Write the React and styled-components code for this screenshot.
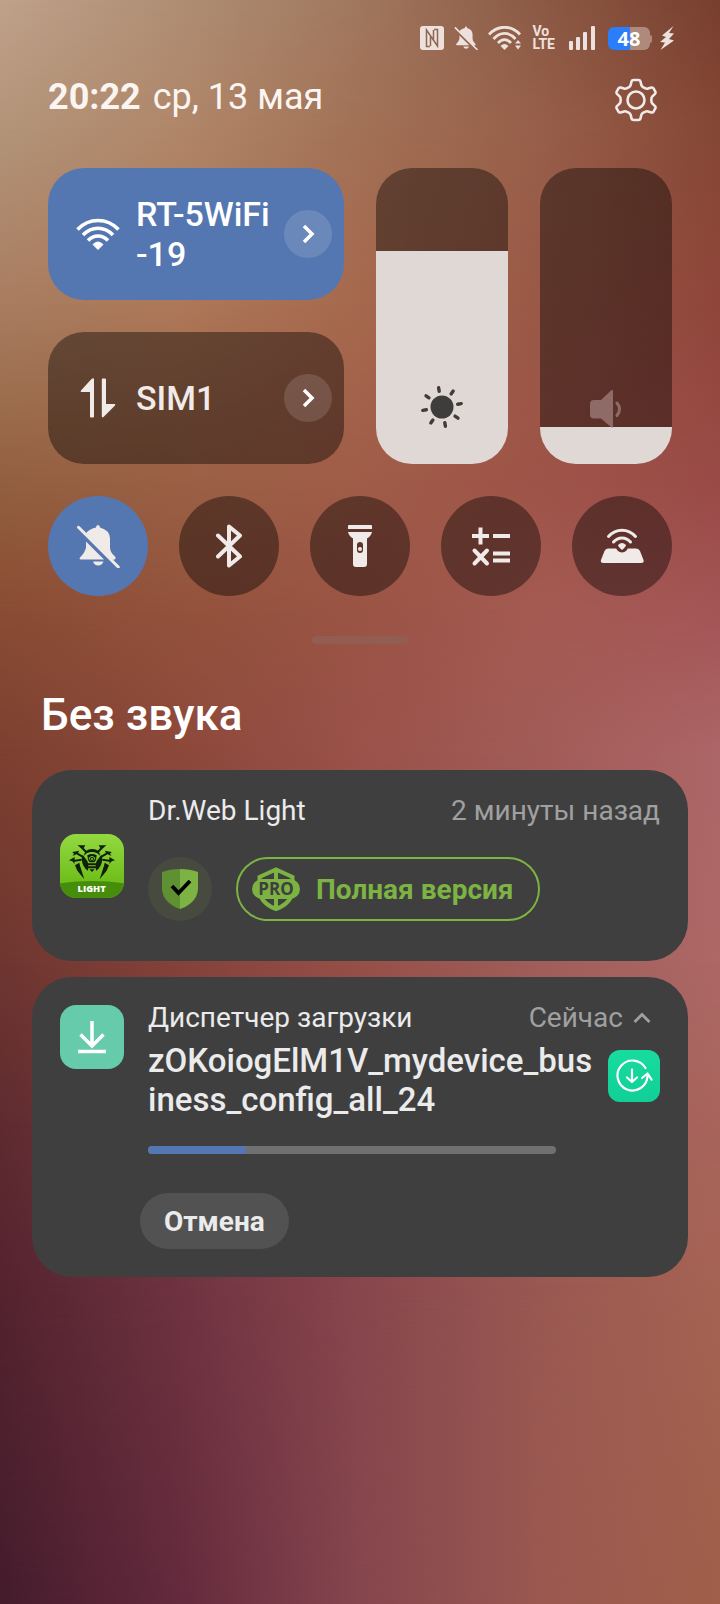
import { useState } from "react";
import styled, { createGlobalStyle } from "styled-components";

// wallpaper colours: [height in %, colours from left to right]
const wallpaper = [
  [0, ["#bfa28a", "#af8e74", "#a0785e", "#8c5a45", "#783f2e"]],
  [8, ["#b39479", "#b08669", "#a27156", "#975f49", "#854635"]],
  [19, ["#a87c60", "#ad7858", "#a6684e", "#9a5846", "#8f463a"]],
  [30, ["#92603f", "#9a6045", "#a05c48", "#9e5448", "#9a4a47"]],
  [38, ["#8a4c34", "#93523c", "#9a5444", "#a45a52", "#a35556"]],
  [47, ["#7c4030", "#8c483a", "#9a524a", "#a25c58", "#ad6667"]],
  [60, ["#6e3630", "#84423a", "#965048", "#a05e5a", "#ad6866"]],
  [70, ["#5f2b30", "#7a3c40", "#8d494a", "#9d5c57", "#a8645c"]],
  [80, ["#54232f", "#6f3340", "#88464d", "#9a5852", "#a56353"]],
  [100, ["#441c2c", "#642a3d", "#85464e", "#9a5850", "#9f5f49"]],
];

const WifiShape = () => (
  <svg width="44" height="34" viewBox="0 0 44 34" fill="none">
    <g stroke="currentColor" strokeWidth="3.600">
      <path d="M1.500 12.500C13 .500 31 .500 42.500 12.500" />
      <path d="M7 18C16 9 28 9 37 18" />
      <path d="M12 23.500C18 17.500 26 17.500 32 23.500" />
    </g>
    <path
      d="M17 27.500Q22 22.500 27 27.500L22 32.500Z"
      fill="currentColor"
      stroke="currentColor"
      strokeLinejoin="round"
    />
  </svg>
);

const DataShape = () => (
  <svg width="44" height="44" viewBox="0 0 44 44" fill="currentColor">
    <path d="M15 3.500q3-2.500 3 0v37q0 1-1 1h-2q-1 0-1-1V16H5.500q-1.500 0-.5-1.500z" />
    <path d="M25.800 3.500q0-1 1-1h2.200q1 0 1 1V28h8.500q1.500 0 .5 1.500L28 40.500q-2.200 2-2.200-.5z" />
  </svg>
);

const BellOff = ({ size }) => (
  <svg width={size} height={size} viewBox="0 0 44 44">
    <g fill="currentColor">
      <path d="M6 35.500q-3.500 0-2-2 5-5 6-10v-6L28 35.500z" />
      <path d="M9.500 10q3-5 10.500-6.500 0-2.500 2-2.500t2 2.500q9.500 2.500 10 11v9q0 5 5 9 2 3-2 3.200h-2z" />
      <path d="M17 37.500h10.500q-1.500 4-5.300 4t-5.200-4z" />
    </g>
    <path
      d="M2.500 3.300L42.300 43"
      stroke="currentColor"
      strokeWidth="3"
      strokeLinecap="round"
    />
  </svg>
);

const BluetoothShape = () => (
  <svg
    width="44"
    height="44"
    viewBox="0 0 44 44"
    fill="none"
    stroke="currentColor"
    strokeWidth="4"
    strokeLinecap="round"
    strokeLinejoin="round"
  >
    <path d="M11 11.500L33 32.500 22 41.500V2.500L33 11.500 11 32.500" />
  </svg>
);

const TorchShape = () => (
  <svg width="44" height="44" viewBox="0 0 44 44" fill="currentColor">
    <path d="M10 2q0-1 1-1h22q1 0 1 1v3H10z" />
    <path
      fillRule="evenodd"
      d="M10 8h24q-1 4-5 6.500V40q0 3-3 3h-8q-3 0-3-3V14.500Q11 12 10 8zM22 18q-3 0-3 3v5q0 3 3 3t3-3v-5q0-3-3-3z"
    />
    <circle cx="22" cy="25" r="2" />
  </svg>
);

const MathShape = () => (
  <svg
    width="44"
    height="44"
    viewBox="0 0 44 44"
    fill="none"
    stroke="currentColor"
    strokeWidth="4"
  >
    <path d="M3 12h17M11.500 3.500v17M24 12h17M24 29.500h17M24 36.500h17" />
    <path d="M5.500 26.500l12.500 13M18 26.500l-12.500 13" strokeLinecap="round" />
  </svg>
);

const RouterShape = () => (
  <svg width="46" height="44" viewBox="0 0 46 44" fill="none">
    <path
      d="M9 24.500h28q3 0 4 2.500l3.500 9q1 3-2.500 3H4.500q-3.500 0-2.500-3l3.500-9q1-2.500 3.500-2.500z"
      fill="currentColor"
    />
    <circle cx="23" cy="22.500" r="6" fill="#60302b" />
    <path d="M19 21q4-4 8 0 0 1.500-4 5-4-3.500-4-5z" fill="currentColor" />
    <g stroke="currentColor" strokeWidth="3" strokeLinecap="round">
      <path d="M9.500 12.500C17 4 29 4 36.500 12.500" />
      <path d="M14.500 18C19 12.500 27 12.500 31.500 18" />
    </g>
  </svg>
);

const ArrowShape = () => (
  <svg width="16" height="20" viewBox="0 0 16 20" fill="none">
    <path d="M4 2L12 10L4 18" stroke="#fff" strokeWidth="3.500" />
  </svg>
);

const GearShape = () => (
  <svg
    width="42"
    height="44"
    viewBox="0 0 42 44"
    fill="none"
    stroke="currentColor"
    strokeWidth="2.600"
    strokeLinejoin="round"
  >
    <path d="M18.500 2h5q1.500 0 2 1.500l.8 3.500q.5 1.500 2 2.300l1.700.9q1.400.8 3 .4l3.400-1q1.400-.4 2.100.8l1.700 3q.8 1.400-.2 2.400l-2.600 2.600q-1.100 1.100-1.100 3.600t1.100 3.600l2.600 2.600q1 1 .2 2.400l-1.700 3q-.7 1.200-2.100.8l-3.400-1q-1.600-.4-3 .4l-1.700.9q-1.500.8-2 2.300l-.8 3.500q-.5 1.500-2 1.500h-5q-1.500 0-2-1.500l-.8-3.500q-.5-1.500-2-2.300l-1.700-.9q-1.400-.8-3-.4l-3.400 1q-1.400.4-2.100-.8l-1.700-3q-.8-1.400.2-2.400l2.600-2.600q1.100-1.100 1.100-3.600t-1.100-3.600L2 15.800q-1-1-.2-2.400l1.700-3q.7-1.200 2.100-.8l3.400 1q1.600.4 3-.4l1.700-.9q1.500-.8 2-2.300l.8-3.500q.5-1.500 2-1.500z" />
    <circle cx="21" cy="22" r="8.500" />
  </svg>
);

const SunShape = () => (
  <svg width="44" height="44" viewBox="0 0 44 44">
    <circle cx="22" cy="22" r="11.500" fill="#3f3d3c" />
    <g stroke="#3f3d3c" strokeWidth="3.400" strokeLinecap="round">
      {[-10, 35, 80, 125, 170, 215, 260, 305].map((angle) => (
        <path
          key={angle}
          d="M22 2.500v3.600"
          transform={`rotate(${angle} 22 22)`}
        />
      ))}
    </g>
  </svg>
);

const SpeakerShape = () => (
  <svg width="34" height="40" viewBox="0 0 34 40" fill="none">
    <path
      d="M5 11h7L22 1.500q2-1 2 0V38q0 1-2 0L12 29.500H5q-4 0-4-4V15q0-4 4-4z"
      fill="#8e6b67"
    />
    <path
      d="M28 14q5 6 0 12.500"
      stroke="#8e6b67"
      strokeWidth="3"
      strokeLinecap="round"
    />
  </svg>
);

const NfcShape = () => (
  <svg width="24" height="24" viewBox="0 0 24 24">
    <rect width="24" height="24" rx="3" fill="currentColor" />
    <path
      d="M10 20.500H6.500V4L17.500 20V3.500H14M10.500 10.500v9.500M13.500 13.500V4"
      fill="none"
      stroke="#8f664f"
      strokeWidth="1.500"
    />
  </svg>
);

const SmallWifi = () => (
  <svg width="34" height="24" viewBox="0 0 34 24" fill="none">
    <g stroke="currentColor" strokeWidth="2.800">
      <path d="M1 8.500C10 -1.200 23 -1.200 32 8.500" />
      <path d="M5.500 13C12 5.500 21 5.500 27.500 13" />
      <path d="M10 17C14 12.500 19 12.500 23 17" />
    </g>
    <path d="M12.500 20q4-4 8 0l-4 4z" fill="currentColor" />
    <path d="M27 17.500l3-3.500 3 3.500zM27 19.500h6L30 23.500z" fill="currentColor" />
  </svg>
);

const SignalShape = () => (
  <svg width="26" height="24" viewBox="0 0 26 24" fill="currentColor">
    <rect x="0" y="15" width="4" height="9" rx="1" />
    <rect x="7" y="11" width="4" height="13" rx="1" />
    <rect x="14" y="6" width="4" height="18" rx="1" />
    <rect x="22" y="0" width="4" height="24" rx="1" />
  </svg>
);

const BoltShape = () => (
  <svg width="14" height="24" viewBox="0 0 14 24" fill="currentColor">
    <path d="M13.500 0L2 9.500l4 1.500L0 16l5 .5L.5 24 14 14.500 9 13l5-5.500-5-.5z" />
  </svg>
);

const DrWebLogo = () => (
  <svg width="64" height="64" viewBox="0 0 192 192">
    <defs>
      <linearGradient id="lime" x1="0" y1="0" x2="0" y2="1">
        <stop offset="0" stopColor="#93d941" />
        <stop offset="0.750" stopColor="#6fbe1b" />
      </linearGradient>
      <clipPath id="tile">
        <rect width="192" height="192" rx="48" />
      </clipPath>
    </defs>
    <g clipPath="url(#tile)">
      <rect width="192" height="192" fill="url(#lime)" />
      <path d="M0 148Q96 134 192 148V192H0z" fill="#468d0c" />
    </g>
    <g fill="#10210a">
      <path d="M72 65Q74 46 96 45t24 20l-8-7q-16-8-32 0z" />
      <path d="M68 62l14 19 3 9-1 20q-17-10-19-36zM124 62l-14 19-3 9 1 20q17-10 19-36z" />
      <path d="M82 64q14-8 28 0l-2 14-5 7h-14l-5-7zM82 88h28v6H82zM84 97h24v6H84zM88 106h16l-8 8z" />
      <path d="M53 34h23l-5 8 12 12-5 4-15-15zM139 34h-23l5 8-12 12 5 4 15-15z" />
      <path d="M37 54l21-4-4 6 17 11-2 5-20-11-12 5 5-6zM155 54l-21-4 4 6-17 11 2 5 20-11 12 5-5-6z" />
      <path d="M27 79l17-10v8l21-3v6l-22 3 1 7-7-8zM165 79l-17-10v8l-21-3v6l22 3-1 7 7-8z" />
      <path d="M45 94l13-8 2 9 13 41-21-26zM147 94l-13-8-2 9-13 41 21-26z" />
    </g>
    <path
      d="M88 77v-6q8-8 16 0v6M92 80l4-8 4 8"
      fill="none"
      stroke="#7bc92b"
      strokeWidth="3"
    />
    <text
      x="95"
      y="173"
      fill="#fff"
      fontFamily="Open Sans, sans-serif"
      fontSize="28"
      fontWeight="800"
      textAnchor="middle"
    >
      LIGHT
    </text>
  </svg>
);

const ShieldShape = () => (
  <svg width="36" height="40" viewBox="0 0 36 40">
    <path d="M18 0Q8 0 0 3v17q1 14 18 20z" fill="#5f9031" />
    <path d="M18 0q10 0 18 3v17q-1 14-18 20z" fill="#7db342" />
    <path
      d="M10 17l6.500 7L28 12"
      fill="none"
      stroke="#000"
      strokeWidth="3.800"
    />
  </svg>
);

const ProShape = () => (
  <svg width="48" height="44" viewBox="0 0 48 44">
    <path
      d="M7.500 15V10L24 2.500 40.500 10v5M24 2v12M9 30q4 8 15 12 11-4 15-12M24 30v12"
      fill="none"
      stroke="#7cb342"
      strokeWidth="4"
    />
    <rect y="12" width="48" height="20" rx="10" fill="#7cb342" />
    <text
      x="24"
      y="28"
      fill="#3f3f3f"
      fontFamily="Open Sans, sans-serif"
      fontSize="17"
      fontWeight="700"
      textAnchor="middle"
    >
      PRO
    </text>
  </svg>
);

const DownloadShape = () => (
  <svg width="32" height="34" viewBox="0 0 32 34" fill="none">
    <path
      d="M16 1v25M4.500 14.500L16 26l11.500-11.500M2 31.500h28"
      stroke="#fff"
      strokeWidth="3.500"
    />
  </svg>
);

const UpdateShape = () => (
  <svg
    width="38"
    height="34"
    viewBox="0 0 38 34"
    fill="none"
    stroke="#fff"
    strokeWidth="2.200"
    strokeLinecap="round"
    strokeLinejoin="round"
  >
    <path d="M30.500 9A15 15 0 1 0 32.500 17v-1M27 19l5.500-4.500 4 6" />
    <path d="M17 10.500V23M12 18.500l5 4.500 5-4.500" />
  </svg>
);

const ChevronUp = () => (
  <svg width="18" height="12" viewBox="0 0 18 12" fill="none">
    <path d="M1.500 10L9 2.500l7.500 7.500" stroke="#a0a0a0" strokeWidth="2.800" />
  </svg>
);

const toggles = [
  { label: "Без звука", icon: <BellOff size={44} />, on: true },
  { label: "Bluetooth", icon: <BluetoothShape /> },
  { label: "Фонарик", icon: <TorchShape /> },
  { label: "Калькулятор", icon: <MathShape /> },
  { label: "Точка доступа", icon: <RouterShape /> },
];

const LevelSlider = ({ label, start, icon }) => {
  const [level, setLevel] = useState(start);
  return (
    <SliderBox>
      <SliderInput
        type="range"
        min="0"
        max="1000"
        aria-label={label}
        value={level}
        style={{ "--level": `${level / 10}%` }}
        onChange={(e) => setLevel(Number(e.target.value))}
      />
      <SliderIcon>{icon}</SliderIcon>
    </SliderBox>
  );
};

const App = () => {
  return (
    <Screen>
      <GlobalStyle />
      <Wallpaper aria-hidden="true">
        {wallpaper.map(([stop, colors], i) => (
          <Band
            key={stop}
            $from={i === 0 ? -1 : wallpaper[i - 1][0]}
            $to={stop}
            $colors={colors.join(", ")}
          />
        ))}
      </Wallpaper>

      <StatusBar>
        <NfcShape />
        <BellOff size={24} />
        <SmallWifi />
        <Volte>
          <span>Vo</span>
          <span>LTE</span>
        </Volte>
        <SignalShape />
        <Power>
          <Battery>48</Battery>
          <BoltShape />
        </Power>
      </StatusBar>

      <Header>
        <Clock>
          <b>20:22</b>
          <span>ср, 13 мая</span>
        </Clock>
        <GearButton aria-label="Настройки">
          <GearShape />
        </GearButton>
      </Header>

      <Controls>
        <Tiles>
          <Tile $on>
            <TileButton>
              <WifiShape />
              <span>
                RT-5WiFi
                <br />
                -19
              </span>
            </TileButton>
            <MoreButton aria-label="Сети Wi-Fi">
              <ArrowShape />
            </MoreButton>
          </Tile>
          <Tile>
            <TileButton>
              <DataShape />
              <span>SIM1</span>
            </TileButton>
            <MoreButton aria-label="Мобильные сети">
              <ArrowShape />
            </MoreButton>
          </Tile>
        </Tiles>
        <LevelSlider label="Яркость" start={720} icon={<SunShape />} />
        <LevelSlider label="Громкость" start={125} icon={<SpeakerShape />} />
      </Controls>

      <Toggles>
        {toggles.map((item) => (
          <Toggle
            key={item.label}
            $on={item.on}
            aria-label={item.label}
            aria-pressed={!!item.on}
          >
            {item.icon}
          </Toggle>
        ))}
      </Toggles>
      <Handle />

      <Notifications>
        <h2>Без звука</h2>
        <Card $middle>
          <DrWebLogo />
          <CardBody>
            <CardTop>
              <span>Dr.Web Light</span>
              <Time>2 минуты назад</Time>
            </CardTop>
            <WebActions>
              <ShieldBadge>
                <ShieldShape />
              </ShieldBadge>
              <ProButton>
                <ProShape />
                Полная версия
              </ProButton>
            </WebActions>
          </CardBody>
        </Card>

        <Card>
          <DownloadIcon>
            <DownloadShape />
          </DownloadIcon>
          <CardBody>
            <CardTop>
              <span>Диспетчер загрузки</span>
              <CollapseButton aria-label="Сейчас, свернуть">
                Сейчас
                <ChevronUp />
              </CollapseButton>
            </CardTop>
            <FileRow>
              <FileName>zOKoiogElM1V_mydevice_business_config_all_24</FileName>
              <UpdateIcon>
                <UpdateShape />
              </UpdateIcon>
            </FileRow>
            <Progress
              role="progressbar"
              aria-label="Загрузка"
              aria-valuenow={24}
              aria-valuemin={0}
              aria-valuemax={100}
            >
              <ProgressFill style={{ width: "24%" }} />
            </Progress>
            <CancelButton>Отмена</CancelButton>
          </CardBody>
        </Card>
      </Notifications>
    </Screen>
  );
};

const GlobalStyle = createGlobalStyle`
  * {
    box-sizing: border-box;
  }
  body {
    margin: 0;
    font-family: Roboto, "Liberation Sans", sans-serif;
    color: #f0eae8;
  }
  button {
    margin: 0;
    padding: 0;
    border: none;
    background: none;
    font: inherit;
    color: inherit;
    cursor: pointer;
  }
  svg {
    display: block;
    flex: none;
  }
`;

const Screen = styled.main`
  position: relative;
  isolation: isolate;
  min-height: 100vh;
  overflow: hidden;
`;

const Wallpaper = styled.div`
  position: absolute;
  inset: 0;
  z-index: -1;
`;

const Band = styled.div`
  position: absolute;
  inset: 0;
  background: linear-gradient(to right, ${(props) => props.$colors});
  mask-image: linear-gradient(
    transparent ${(props) => props.$from}%,
    #000 ${(props) => props.$to}%
  );
`;

const StatusBar = styled.div`
  display: flex;
  align-items: center;
  justify-content: flex-end;
  gap: 10px;
  height: 64px;
  padding: 12px 46px 0 0;
  color: #ece1dc;
`;

const Volte = styled.div`
  display: flex;
  flex-direction: column;
  margin-right: 4px;
  font-family: Roboto, sans-serif;
  font-size: 14px;
  font-weight: 700;
  line-height: 13px;
`;

const Power = styled.div`
  display: flex;
  align-items: center;
  gap: 10px;
  margin-left: 3px;
`;

const Battery = styled.div`
  position: relative;
  width: 42px;
  height: 23px;
  border-radius: 6px;
  background: linear-gradient(to right, #2a7dfb 52%, #ad8a7c 52%);
  color: #fff;
  font-family: "Open Sans", sans-serif;
  font-size: 20px;
  font-weight: 700;
  line-height: 23px;
  text-align: center;
  &::after {
    content: "";
    position: absolute;
    left: 100%;
    top: 8px;
    width: 2px;
    height: 8px;
    border-radius: 0 2px 2px 0;
    background: #ad8a7c;
  }
`;

const Header = styled.header`
  display: flex;
  align-items: center;
  justify-content: space-between;
  height: 72px;
  padding: 0 48px;
`;

const Clock = styled.div`
  display: flex;
  gap: 12px;
  padding-bottom: 6px;
  font-size: 36px;
  line-height: 42px;
  color: #fbf5f1;
`;

const GearButton = styled.button`
  display: flex;
  align-items: center;
  justify-content: center;
  width: 72px;
  height: 72px;
`;

const Controls = styled.section`
  display: grid;
  grid-template-columns: 1fr 132px 132px;
  gap: 32px;
  margin: 32px 48px 0;
`;

const Tiles = styled.div`
  display: flex;
  flex-direction: column;
  gap: 32px;
`;

const Tile = styled.div`
  display: flex;
  align-items: center;
  height: 132px;
  padding: 0 12px 0 28px;
  border-radius: 36px;
  background: ${(props) => (props.$on ? "#5577b1" : "rgba(0, 0, 0, 0.4)")};
  color: ${(props) => (props.$on ? "#fff" : "#f0eae8")};
`;

const TileButton = styled.button`
  display: flex;
  flex: 1;
  align-items: center;
  gap: 16px;
  height: 100%;
  font-size: 34px;
  font-weight: 500;
  line-height: 40px;
  text-align: left;
  white-space: nowrap;
`;

const MoreButton = styled.button`
  display: flex;
  align-items: center;
  justify-content: center;
  width: 48px;
  height: 48px;
  border-radius: 50%;
  background: rgba(255, 255, 255, 0.13);
`;

const SliderBox = styled.div`
  position: relative;
  overflow: hidden;
  border-radius: 36px;
`;

const SliderInput = styled.input`
  display: block;
  width: 100%;
  height: 296px;
  margin: 0;
  appearance: none;
  writing-mode: vertical-lr;
  direction: rtl;
  background: linear-gradient(
    to top,
    #dfd8d5 var(--level),
    rgba(0, 0, 0, 0.4) var(--level)
  );
  &::-webkit-slider-thumb {
    appearance: none;
    width: 132px;
    height: 1px;
    opacity: 0;
  }
`;

const SliderIcon = styled.span`
  position: absolute;
  left: 0;
  right: 0;
  bottom: 35px;
  display: flex;
  justify-content: center;
  pointer-events: none;
`;

const Toggles = styled.section`
  display: flex;
  justify-content: space-between;
  margin: 32px 48px 0;
`;

const Toggle = styled.button`
  display: flex;
  align-items: center;
  justify-content: center;
  width: 100px;
  height: 100px;
  border-radius: 50%;
  background: ${(props) => (props.$on ? "#5577b1" : "rgba(0, 0, 0, 0.4)")};
`;

const Handle = styled.div`
  width: 96px;
  height: 8px;
  margin: 40px auto 0;
  border-radius: 4px;
  background: #935d51;
`;

const Notifications = styled.section`
  display: flex;
  flex-direction: column;
  gap: 16px;
  padding: 44px 32px 32px;
  h2 {
    margin: 0;
    padding: 1px 9px 13px;
    font-size: 44px;
    font-weight: 500;
    line-height: 52px;
    color: #fff;
  }
`;

const Card = styled.article`
  display: flex;
  align-items: ${(props) => (props.$middle ? "center" : "flex-start")};
  gap: 24px;
  padding: 0 28px;
  border-radius: 40px;
  background: #3f3f3f;
  color: #ebebeb;
`;

const CardBody = styled.div`
  display: flex;
  flex: 1;
  flex-direction: column;
  min-width: 0;
  padding-top: 24px;
`;

const CardTop = styled.div`
  display: flex;
  justify-content: space-between;
  font-size: 28px;
  line-height: 33px;
`;

const Time = styled.span`
  color: #a0a0a0;
`;

const WebActions = styled.div`
  display: flex;
  gap: 24px;
  padding: 30px 0 40px;
`;

const ShieldBadge = styled.div`
  display: flex;
  align-items: center;
  justify-content: center;
  width: 64px;
  height: 64px;
  border-radius: 50%;
  background: #474b3f;
`;

const ProButton = styled.button`
  display: flex;
  align-items: center;
  gap: 16px;
  height: 64px;
  padding: 0 24px 0 14px;
  border: 2px solid #7cb342;
  border-radius: 32px;
  color: #7cb342;
  font-size: 28px;
  font-weight: 700;
`;

const DownloadIcon = styled.div`
  display: flex;
  align-items: center;
  justify-content: center;
  width: 64px;
  height: 64px;
  margin-top: 28px;
  border-radius: 16px;
  background: #65cbaa;
`;

const CollapseButton = styled.button`
  display: flex;
  align-items: center;
  gap: 10px;
  padding-right: 9px;
  color: #a0a0a0;
`;

const FileRow = styled.div`
  display: flex;
  align-items: flex-start;
  justify-content: space-between;
  padding-top: 7px;
`;

const FileName = styled.div`
  width: 452px;
  font-size: 33px;
  font-weight: 500;
  line-height: 39px;
  word-break: break-all;
`;

const UpdateIcon = styled.div`
  display: flex;
  align-items: center;
  justify-content: center;
  width: 52px;
  height: 52px;
  margin-top: 9px;
  border-radius: 12px;
  background: linear-gradient(#18dc9f, #10cf97);
`;

const Progress = styled.div`
  height: 8px;
  margin: 27px 104px 0 0;
  overflow: hidden;
  border-radius: 4px;
  background: #707070;
`;

const ProgressFill = styled.div`
  height: 100%;
  background: #5577b1;
`;

const CancelButton = styled.button`
  align-self: flex-start;
  height: 56px;
  margin: 39px 0 28px -8px;
  padding: 0 24px;
  border-radius: 28px;
  background: #525252;
  font-size: 28px;
  font-weight: 700;
`;

export default App;
